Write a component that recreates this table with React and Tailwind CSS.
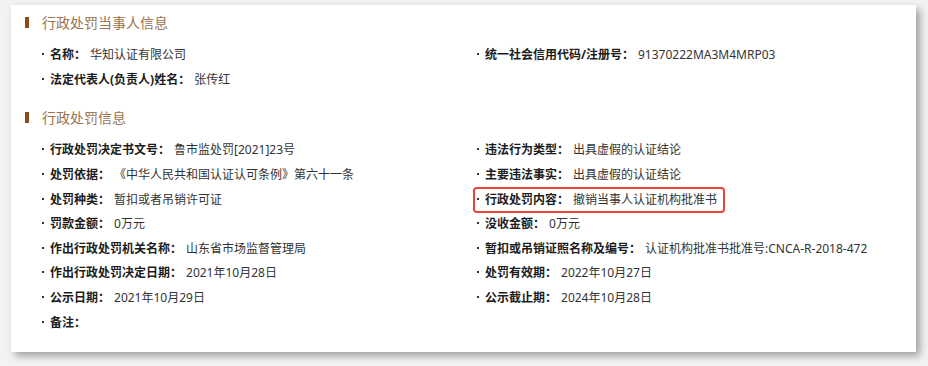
const partyRows = [
    [['名称：', '华知认证有限公司'], ['统一社会信用代码/注册号：', '91370222MA3M4MRP03']],
    [['法定代表人(负责人)姓名：', '张传红'], null],
];

const penaltyRows = [
    [['行政处罚决定书文号：', '鲁市监处罚[2021]23号'], ['违法行为类型：', '出具虚假的认证结论']],
    [['处罚依据：', '《中华人民共和国认证认可条例》第六十一条'], ['主要违法事实：', '出具虚假的认证结论']],
    [['处罚种类：', '暂扣或者吊销许可证'], ['行政处罚内容：', '撤销当事人认证机构批准书', true]],
    [['罚款金额：', '0万元'], ['没收金额：', '0万元']],
    [['作出行政处罚机关名称：', '山东省市场监督管理局'], ['暂扣或吊销证照名称及编号：', '认证机构批准书批准号:CNCA-R-2018-472']],
    [['作出行政处罚决定日期：', '2021年10月28日'], ['处罚有效期：', '2022年10月27日']],
    [['公示日期：', '2021年10月29日'], ['公示截止期：', '2024年10月28日']],
    [['备注：', ''], null],
];

function Item({ item }) {
    if (!item) return <div />;
    const [label, value, marked] = item;
    const inner = (
        <>
            <span className="w-[8px] shrink-0 flex items-center -translate-y-[1px]">
                <span className="w-[2px] h-[2px] bg-[#333]" />
            </span>
            <span className="font-bold text-[#1c1c1c]">{label}</span>
            <span className="ml-[4px] text-[#333]">{value}</span>
        </>
    );
    if (marked) {
        return (
            <div className="flex items-center">
                <div className="flex items-center h-[26px] -ml-[4px] pl-[2px] pr-[6px] border-2 border-[#e8453c] rounded-[4px]">
                    {inner}
                </div>
            </div>
        );
    }
    return <div className="flex items-center">{inner}</div>;
}

function Section({ title, rows, className }) {
    return (
        <div className={className}>
            <div className="flex items-center h-[20px] pl-[14px]">
                <span className="w-[4px] h-[11px] bg-[#8a4a17]" />
                <span className="ml-[13px] text-[14px] text-[#9a7350]">{title}</span>
            </div>
            <div className="grid grid-cols-[435px_1fr] pl-[31px] mt-[11px]">
                {rows.map((row, i) => (
                    <div key={i} className="contents">
                        <div className="h-[24.6px] flex items-center"><Item item={row[0]} /></div>
                        <div className="h-[24.6px] flex items-center"><Item item={row[1]} /></div>
                    </div>
                ))}
            </div>
        </div>
    );
}

export default function App() {
    return (
        <div
            className="w-[928px] h-[366px] bg-[#f3f3f3] pt-[5px] pl-[11px] text-[12px]"
            style={{ fontFamily: '"Microsoft YaHei", "Noto Sans", "Noto Sans CJK SC", sans-serif' }}
        >
            <div className="w-[905px] h-[347px] bg-white shadow-[4px_4px_8px_rgba(0,0,0,0.35)] pt-[7px]">
                <Section title="行政处罚当事人信息" rows={partyRows} />
                <Section title="行政处罚信息" rows={penaltyRows} className="mt-[15px]" />
            </div>
        </div>
    );
}
